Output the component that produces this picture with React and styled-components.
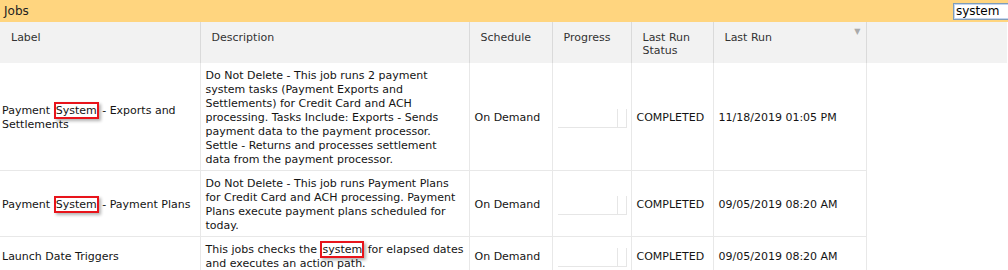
import React from "react";
import styled, { createGlobalStyle } from "styled-components";

const GlobalStyle = createGlobalStyle`
	body {
		margin: 0;
		background: #fff;
		font-family: "DejaVu Sans", Verdana, sans-serif;
		color: #222;
	}
`;

const jobs = [
	{
		label: ["Payment ", { hit: "System" }, " - Exports and Settlements"],
		description: [
			"Do Not Delete - This job runs 2 payment system tasks (Payment Exports and Settlements) for Credit Card and ACH processing. Tasks Include: Exports - Sends payment data to the payment processor. Settle - Returns and processes settlement data from the payment processor.",
		],
		schedule: "On Demand",
		status: "COMPLETED",
		lastRun: "11/18/2019 01:05 PM",
	},
	{
		label: ["Payment ", { hit: "System" }, " - Payment Plans"],
		description: [
			"Do Not Delete - This job runs Payment Plans for Credit Card and ACH processing. Payment Plans execute payment plans scheduled for today.",
		],
		schedule: "On Demand",
		status: "COMPLETED",
		lastRun: "09/05/2019 08:20 AM",
	},
	{
		label: ["Launch Date Triggers"],
		description: [
			"This jobs checks the ",
			{ hit: "system" },
			" for elapsed dates and executes an action path.",
		],
		schedule: "On Demand",
		status: "COMPLETED",
		lastRun: "09/05/2019 08:20 AM",
	},
];

// plain strings stay as text, { hit } entries get the search-match frame
function Text({ parts }) {
	return parts.map((p, i) =>
		typeof p === "string" ? p : <Hit key={i}>{p.hit}</Hit>
	);
}

function App() {
	return (
		<>
			<GlobalStyle />
			<TitleBar>
				<Title>Jobs</Title>
				<Search defaultValue="system" />
			</TitleBar>
			<Grid>
				<colgroup>
					<col style={{ width: 200 }} />
					<col style={{ width: 269 }} />
					<col style={{ width: 83 }} />
					<col style={{ width: 79 }} />
					<col style={{ width: 82 }} />
					<col style={{ width: 153 }} />
					<col />
				</colgroup>
				<thead>
					<tr>
						<Th>Label</Th>
						<Th>Description</Th>
						<Th>Schedule</Th>
						<Th>Progress</Th>
						<Th>
							Last Run
							<br />
							Status
						</Th>
						<Th $sorted>Last Run</Th>
						<Th $filler />
					</tr>
				</thead>
				<tbody>
					{jobs.map((job, i) => (
						<tr key={i}>
							<Td $tight>
								<Text parts={job.label} />
							</Td>
							<Td>
								<Text parts={job.description} />
							</Td>
							<Td>{job.schedule}</Td>
							<Td>
								<Progress>
									<ProgressFill />
								</Progress>
							</Td>
							<Td>{job.status}</Td>
							<Td>{job.lastRun}</Td>
							<Blank />
						</tr>
					))}
				</tbody>
			</Grid>
		</>
	);
}

export default App;

const TitleBar = styled.div`
	display: flex;
	align-items: center;
	justify-content: space-between;
	height: 22px;
	background: #ffd57f;
	overflow: hidden;
`;

const Title = styled.span`
	font-size: 12px;
	color: #222;
	padding-left: 4px;
`;

const Search = styled.input`
	box-sizing: border-box;
	width: 60px;
	height: 17px;
	margin-right: -5px;
	padding: 0 2px;
	border: 1px solid #7f9db9;
	box-shadow: inset 0 0 0 1px #c4d5ef;
	font-family: "DejaVu Sans", Verdana, sans-serif;
	font-size: 12px;
	color: #000;
	outline: none;
`;

const Grid = styled.table`
	width: 1008px;
	border-collapse: collapse;
	table-layout: fixed;
	font-size: 11px;
`;

const Th = styled.th`
	position: relative;
	height: 41px;
	box-sizing: border-box;
	padding: 9px 10px 0 11px;
	vertical-align: top;
	text-align: left;
	font-weight: normal;
	line-height: 13px;
	color: #333;
	background: #f2f2f2;
	border-right: 1px solid ${(p) => (p.$filler ? "transparent" : "#dadada")};

	&::after {
		content: "${(p) => (p.$sorted ? "▼" : "")}";
		position: absolute;
		top: 3px;
		right: 5px;
		font-size: 8px;
		color: #aaa;
	}
`;

const Td = styled.td`
	padding: 6px ${(p) => (p.$tight ? "2px" : "5px")} 3px;
	vertical-align: middle;
	line-height: 14px;
	color: #141414;
	border-right: 1px solid #e8e8e8;
	border-bottom: 1px solid #e8e8e8;
`;

const Blank = styled.td`
	border: none;
`;

const Hit = styled.span`
	border: 2px solid #e8141b;
	box-shadow: 2px 2px 3px rgba(0, 0, 0, 0.3);
`;

const Progress = styled.div`
	width: 69px;
	height: 19px;
	box-sizing: border-box;
	border-bottom: 1px solid #e6e6e6;
	border-right: 1px solid #e6e6e6;
`;

const ProgressFill = styled.div`
	width: 60px;
	height: 100%;
	box-sizing: border-box;
	border-right: 1px solid #e6e6e6;
`;
